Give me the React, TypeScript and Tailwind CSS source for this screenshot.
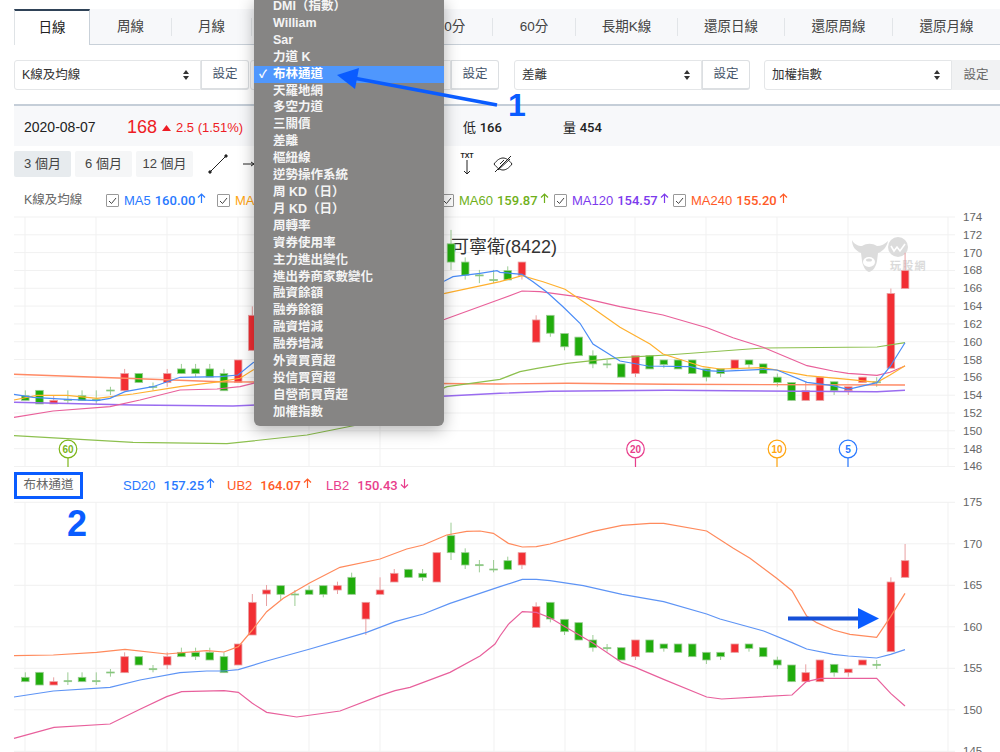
const fontStack = "font-['Liberation_Sans','Noto_Sans_CJK_TC',sans-serif]";

const tabs = [
  { label: '日線', w: 'w-[76px]' },
  { label: '周線', w: 'w-[82px]' },
  { label: '月線', w: 'w-[80px]' },
  { label: '5分', w: 'w-[79px]' },
  { label: '15分', w: 'w-[79px]' },
  { label: '30分', w: 'w-[83px]' },
  { label: '60分', w: 'w-[83px]' },
  { label: '長期K線', w: 'w-[102px]' },
  { label: '還原日線', w: 'w-[107px]' },
  { label: '還原周線', w: 'w-[108px]' },
  { label: '還原月線', w: 'w-[107px]' },
];

const menuItems = [
  'DMI（指數）', 'William', 'Sar', '力道 K', '布林通道', '天羅地網', '多空力道', '三關價', '差離',
  '樞紐線', '逆勢操作系統', '周 KD（日）', '月 KD（日）', '周轉率', '資券使用率', '主力進出變化',
  '進出券商家數變化', '融資餘額', '融券餘額', '融資增減', '融券增減', '外資買賣超', '投信買賣超',
  '自營商買賣超', '加權指數',
];

// high, body top, body bottom, low, up - all read off the lower chart
const candles: [number, number, number, number, number][] = [
  [607, 622, 635, 635, 0], [607, 607, 645, 645, 0], [622, 635, 645, 645, 1], [607, 632, 635, 645, 0],
  [607, 622, 635, 635, 0], [607, 632, 635, 645, 0], [597, 606, 608, 620, 0], [547, 560, 608, 608, 1],
  [560, 560, 585, 585, 0], [585, 596, 598, 607, 0], [547, 560, 585, 597, 1], [533, 547, 560, 560, 0],
  [533, 547, 560, 570, 0], [533, 547, 570, 570, 0], [547, 560, 608, 608, 0], [522, 522, 585, 585, 1],
  [372, 397, 495, 495, 1], [345, 360, 372, 408, 1], [347, 347, 373, 390, 0], [360, 372, 374, 408, 0],
  [347, 360, 373, 373, 0], [347, 347, 373, 382, 0], [335, 347, 360, 372, 1], [308, 322, 373, 373, 0],
  [397, 397, 447, 495, 1], [322, 360, 373, 373, 1], [297, 310, 336, 336, 1], [298, 298, 322, 322, 0],
  [297, 310, 322, 333, 0], [248, 248, 336, 336, 1], [158, 197, 248, 270, 0], [235, 248, 285, 297, 0],
  [270, 284, 286, 307, 0], [270, 297, 299, 307, 0], [260, 272, 298, 298, 0], [248, 248, 285, 297, 1],
  [397, 410, 472, 472, 1], [397, 397, 447, 457, 0], [448, 448, 485, 495, 0], [458, 458, 510, 510, 0],
  [495, 510, 533, 545, 0], [522, 533, 535, 545, 0], [533, 533, 570, 570, 0], [510, 510, 560, 570, 1],
  [510, 510, 547, 547, 0], [522, 522, 535, 545, 0], [522, 522, 547, 547, 0], [522, 522, 560, 560, 0],
  [547, 547, 570, 582, 0], [547, 547, 560, 570, 0], [522, 522, 547, 547, 1], [522, 522, 535, 545, 0],
  [533, 533, 560, 560, 0], [560, 570, 585, 597, 0], [585, 585, 635, 635, 0], [583, 608, 635, 635, 1],
  [570, 570, 635, 635, 1], [583, 583, 608, 620, 0], [597, 597, 608, 620, 1], [570, 570, 585, 585, 1],
  [570, 583, 585, 597, 0], [322, 336, 545, 545, 1], [222, 272, 322, 322, 1],
];

const candleX = (i: number) => 25.3 + i * 14.19;
const lowerY = (z: number) => 470 + z / 3;
const upperY = (z: number) => {
  const price = 175 - (z - 97) / 24.93;
  return 217 + (174 - price) * 8.91;
};

const gridX = [25, 96, 167, 238, 309, 380, 494, 565, 635, 706, 777, 848, 948];

const upperLines = [
  { color: '#ff8a65', d: '14,374.3 125,378.3 220,381.7 500,384 567,383.3 667,384.3 905,385', w: 1.4 },
  { color: '#9a6cf0', d: '14,402.3 133,405 233,406 447,396 500,393.3 550,391.3 667,390.3 877,391.7 905,390.3', w: 1.4 },
  { color: '#8dc04f', d: '14,435.7 133,442.3 227,443.7 307,435 357,425 447,386.7 500,379.3 520,371.7 537,368.3 567,363.3 620,357.7 667,355 763,348 877,347 905,342.7', w: 1.2 },
  { color: '#e9609a', d: '14,417.3 53,411 110,406.7 140,400 180,390 217,389 240,386.7 253,383.3 445,319.3 500,299.3 522,291 540,291.7 577,296.7 620,306.7 663,315 707,327.7 733,337.7 763,347.3 807,365.7 833,371 848,373.3 877,375.3 890,372.3 905,366', w: 1.2 },
  { color: '#ffb02e', d: '14,400 37,395.3 67,395.3 97,398.3 133,394 180,386.7 220,381.7 240,378.3 253,370 445,293.3 500,281.7 522,275.7 543,281.7 565,289.3 593,308.3 620,327.3 650,344 663,354 703,366.7 720,369 763,367.7 807,375.7 848,379.3 877,382.3 890,375 905,365.7', w: 1.2 },
  { color: '#4a8cf7', d: '14,394.3 33,397.3 67,399.3 97,400.7 110,398.3 125,391.7 153,386.7 180,377.3 220,376.7 238,375 253,362.7 445,280.7 453,276.7 480,273.3 497,270.7 500,272.3 522,274.3 533,281.7 547,292.3 563,306.7 580,323.3 593,344 620,361 648,366 690,366.7 707,370.7 720,371.3 763,369.3 777,370 807,382.3 833,385.7 848,389.3 877,382.7 890,366.7 905,342.7', w: 1.2 },
];

const toLower = (pts: number[][]) => pts.map(([x, y]) => `${x / 3},${lowerY(y)}`).join(' ');

const lowerLines = [
  {
    color: '#ff8a5c',
    d: toLower([[42, 557], [160, 555], [290, 547], [375, 538], [500, 552], [620, 542], [672, 546], [715, 530], [757, 480], [800, 425], [850, 385], [930, 338], [1020, 292], [1140, 267], [1220, 237], [1270, 225], [1340, 195], [1400, 184], [1440, 183], [1480, 190], [1500, 203], [1525, 220], [1567, 231], [1609, 230], [1650, 222], [1780, 184], [1866, 166], [1950, 160], [1991, 160], [2120, 183], [2200, 235], [2250, 265], [2330, 325], [2376, 362], [2420, 438], [2450, 458], [2500, 480], [2550, 493], [2630, 502], [2672, 440], [2715, 370]]),
  },
  {
    color: '#5e94f5',
    d: toLower([[42, 681], [160, 663], [330, 652], [420, 630], [540, 608], [620, 603], [672, 603], [715, 599], [800, 573], [930, 537], [1100, 487], [1185, 455], [1270, 432], [1350, 400], [1500, 350], [1567, 328], [1609, 328], [1650, 332], [1750, 347], [1866, 373], [1991, 395], [2120, 432], [2160, 447], [2291, 483], [2376, 518], [2420, 537], [2500, 553], [2545, 558], [2630, 564], [2672, 553], [2715, 539]]),
  },
  {
    color: '#e8609c',
    d: toLower([[42, 805], [162, 772], [330, 762], [420, 718], [500, 680], [545, 665], [672, 662], [715, 667], [757, 700], [800, 727], [890, 741], [1020, 723], [1140, 677], [1185, 662], [1230, 652], [1350, 607], [1440, 558], [1485, 522], [1500, 498], [1525, 463], [1567, 425], [1609, 427], [1650, 443], [1695, 470], [1780, 520], [1866, 578], [1906, 592], [1991, 628], [2120, 681], [2165, 687], [2376, 675], [2419, 635], [2462, 625], [2630, 625], [2672, 670], [2715, 708]]),
  },
];

const upperTicks = [174, 172, 170, 168, 166, 164, 162, 160, 158, 156, 154, 152, 150, 148, 146];
const lowerTicks = [175, 170, 165, 160, 155, 150, 145];

const badges = [
  { x: 68, label: '60', color: '#7cb518' },
  { x: 635.5, label: '20', color: '#e83e8c' },
  { x: 777, label: '10', color: '#ffa50f' },
  { x: 848, label: '5', color: '#2979ff' },
];

function Candles({ y }: { y: (z: number) => number }) {
  return (
    <>
      {candles.map(([hi, top, bot, lo, up], i) => {
        const x = candleX(i);
        const fill = up ? '#f22e33' : '#20ac0c';
        const edge = up ? '#e8a0a2' : '#9ccc94';
        const h = Math.max(y(bot) - y(top), 1);
        return (
          <g key={i}>
            <line x1={x} x2={x} y1={y(hi)} y2={y(lo)} stroke={edge} strokeWidth="1" />
            <rect x={x - 3.8} y={y(top)} width="7.6" height={h} fill={fill} stroke={edge} strokeWidth="0.8" />
          </g>
        );
      })}
    </>
  );
}

function Watermark() {
  return (
    <g>
      <path d="M852 240c0 7 4 11 9 13l1 8c1 6 4 10 7 11 4-1 7-5 8-11l1-8c4-1 9-6 10-12-3 3-7 5-11 5-5-3-10-3-15 0-4 0-8-2-10-6z" fill="#dcdcdc" />
      <ellipse cx="869" cy="262" rx="6" ry="5" fill="#fff" />
      <ellipse cx="869" cy="260" rx="3" ry="1.6" fill="#dcdcdc" />
      <circle cx="898" cy="247" r="10" fill="#dcdcdc" />
      <path d="M891 246l3 5 3-4 3 4 5-7" fill="none" stroke="#fff" strokeWidth="1.6" />
      <text x="890" y="270" fontSize="11" letterSpacing="1.2" fontWeight="600" fill="#dadada">玩股網</text>
    </g>
  );
}

function UpperChart() {
  return (
    <svg viewBox="0 212 1000 260" className="block w-[1000px] h-[260px]">
      {upperTicks.map((t, i) => (
        <g key={t}>
          <line x1="14" x2="955" y1={217 + i * 17.82} y2={217 + i * 17.82} stroke="#f1f1f1" />
          <text x="963" y={221 + i * 17.82} fontSize="11.5" fill="#666">{t}</text>
        </g>
      ))}
      {gridX.map((x) => (
        <line key={x} x1={x} x2={x} y1="217" y2="467" stroke="#f1f1f1" />
      ))}
      <Watermark />
      <text x="557" y="253" textAnchor="end" fontSize="18" fill="#333">可寧衛(8422)</text>
      <Candles y={upperY} />
      {upperLines.map((l) => (
        <polyline key={l.color} points={l.d} fill="none" stroke={l.color} strokeWidth={l.w} />
      ))}
      {badges.map((b) => (
        <g key={b.label}>
          <line x1={b.x} x2={b.x} y1="458" y2="467" stroke={b.color} strokeWidth="1.2" />
          <circle cx={b.x} cy="449" r="8.8" fill="#fff" stroke={b.color} strokeWidth="1.2" />
          <text x={b.x} y="452.5" textAnchor="middle" fontSize="10" fontWeight="700" fill={b.color}>{b.label}</text>
        </g>
      ))}
    </svg>
  );
}

function LowerChart() {
  return (
    <svg viewBox="0 499 1000 253" className="block w-[1000px] h-[253px] overflow-visible">
      {lowerTicks.map((t, i) => {
        const y = 502.3 + i * 41.5;
        return (
          <g key={t}>
            <line x1="14" x2="955" y1={y} y2={y} stroke="#f1f1f1" />
            <text x="963" y={y + 4} fontSize="11.5" fill="#666">{t}</text>
          </g>
        );
      })}
      {gridX.map((x) => (
        <line key={x} x1={x} x2={x} y1="502" y2="752" stroke="#f1f1f1" />
      ))}
      <Candles y={lowerY} />
      {lowerLines.map((l) => (
        <polyline key={l.color} points={l.d} fill="none" stroke={l.color} strokeWidth="1.2" />
      ))}
    </svg>
  );
}

function Select({ label, muted, w = 'w-[188px]' }: { label: string; muted?: boolean; w?: string }) {
  return (
    <div className="flex h-[30px]">
      <div className={`${w} flex items-center justify-between pl-[7px] pr-[10px] bg-white border border-[#e4e6e8] rounded-l-[3px] text-[12.5px] text-[#333]`}>
        <span>{label}</span>
        <svg width="8" height="12" viewBox="0 0 8 12" fill="#333">
          <path d="M4 1l3 4H1zM4 11L1 7h6z" />
        </svg>
      </div>
      {muted ? (
        <div className="w-[48px] flex items-center justify-center bg-[#f1f2f3] text-[12.5px] text-[#666]">設定</div>
      ) : (
        <div className="w-[48px] flex items-center justify-center bg-white border border-[#dcdfe2] border-b-2 rounded-r-[3px] text-[12.5px] text-[#44546a]">設定</div>
      )}
    </div>
  );
}

function Check() {
  return (
    <span className="w-[13px] h-[13px] mr-[5px] border border-[#999] rounded-[1px] flex items-center justify-center shrink-0">
      <svg width="9" height="8" viewBox="0 0 9 8" fill="none" stroke="#444" strokeWidth="1">
        <path d="M1 4l2.5 2.5L8 1" />
      </svg>
    </span>
  );
}

function UpArrow({ down }: { down?: boolean }) {
  return (
    <svg width="9" height="11" viewBox="0 0 9 11" fill="none" stroke="currentColor" strokeWidth="1.2" className="ml-[2px] -mt-1">
      {down ? <path d="M4.5 1v9M1 6.5l3.5 3.5L8 6.5" /> : <path d="M4.5 10V1M1 4.5L4.5 1 8 4.5" />}
    </svg>
  );
}

function Legend({ name, value, color, down, gap = 'ml-1' }: { name: string; value: string; color: string; down?: boolean; gap?: string }) {
  return (
    <span className={`flex items-center text-[13px] ${color}`}>
      <span>{name}</span>
      <span className={`${gap} font-['Roboto'] font-medium`}>{value}</span>
      <UpArrow down={down} />
    </span>
  );
}

const maItems = [
  { name: 'MA5', value: '160.00', color: 'text-[#2979ff]', w: 'w-[111px]' },
  { name: 'MA10', value: '161.41', color: 'text-[#ffa50f]', w: 'w-[113px]' },
  { name: 'MA20', value: '156.20', color: 'text-[#e83e8c]', w: 'w-[111px]' },
  { name: 'MA60', value: '159.87', color: 'text-[#6fb01a]', w: 'w-[113px]' },
  { name: 'MA120', value: '154.57', color: 'text-[#7c3aed]', w: 'w-[119px]' },
  { name: 'MA240', value: '155.20', color: 'text-[#ff5a26]', w: 'w-[119px]' },
];

export default function App() {
  return (
    <div className={`relative w-[1000px] h-[752px] overflow-hidden bg-white text-[#333] ${fontStack}`}>
      {/* period tabs */}
      <div className="pt-[9px] pl-[14px]">
        <div className="flex h-[36px] bg-[#f7f8fa] border-b border-[#c9d1d9]">
          {tabs.map((t, i) => (
            <div key={t.label} className={`${t.w} pt-px flex items-center justify-center text-[13.5px] ${i === 0 ? 'bg-white border-t-2 border-t-[#2f4257] border-l border-l-[#dfe3e6] border-r border-r-[#c9d1d9] -mb-px text-[#222]' : 'text-[#444]'}`}>
              <span className={i > 0 && i < tabs.length - 1 ? 'w-full text-center border-r border-[#e2e5e8] leading-[14px] py-0.5' : ''}>{t.label}</span>
            </div>
          ))}
        </div>
      </div>

      {/* indicator selects */}
      <div className="flex pl-[14px] mt-[15px] gap-[1px]">
        <Select label="K線及均線" w="w-[187px]" />
        <Select label="布林通道" w="w-[201px]" />
        <div className="ml-[14px]"><Select label="差離" /></div>
        <div className="ml-[13px]"><Select label="加權指數" muted /></div>
      </div>

      {/* quote bar */}
      <div className="ml-[14px] mt-[14px] h-[42px] pt-[3px] bg-[#f7f8fa] border-t-2 border-[#c5ced8] flex items-center pl-[10px] text-[13px] text-[#222]">
        <span className="w-[103px] text-[14px]">2020-08-07</span>
        <span className="text-[18px] text-[#ee1c25] w-[35px]">168</span>
        <span className="text-[#ee1c25] w-[101px] flex items-center">
          <svg width="9" height="6" viewBox="0 0 9 6" fill="#ee1c25" className="mr-[5px]">
            <path d="M4.5 0L9 6H0z" />
          </svg>
          2.5 (1.51%)
        </span>
        <span className="w-[100px]">開 <b className="font-['Roboto'] font-medium">165</b></span>
        <span className="w-[100px]">高 <b className="font-['Roboto'] font-medium">170</b></span>
        <span className="w-[100px]">低 <b className="font-['Roboto'] font-medium">166</b></span>
        <span>量 <b className="font-['Roboto'] font-medium">454</b></span>
      </div>

      {/* range buttons and drawing tools */}
      <div className="ml-[14px] mt-[5px] h-[26px] flex items-center text-[13px] text-[#444]">
        <span className="w-[57px] h-[26px] rounded-[2px] bg-[#e7ebee] flex items-center justify-center">3 個月</span>
        <span className="ml-[4px] w-[57px] h-[26px] rounded-[2px] bg-[#f5f6f7] flex items-center justify-center">6 個月</span>
        <span className="ml-[4px] w-[57px] h-[26px] rounded-[2px] bg-[#f5f6f7] flex items-center justify-center">12 個月</span>
        <svg width="20" height="20" viewBox="0 0 20 20" fill="#222" stroke="#222" className="ml-[15px]">
          <path d="M2 18L18 2" strokeWidth="1" />
          <circle cx="2" cy="18" r="1.2" />
          <circle cx="18" cy="2" r="1.2" />
        </svg>
        <svg width="12" height="10" viewBox="0 0 12 10" fill="none" stroke="#222" className="ml-[15px]">
          <path d="M0 5h11M8 3l3 2-3 2" strokeWidth="1" />
        </svg>
        <div className="w-[204px]" />
        <div className="flex flex-col items-center w-[16px] text-[#222]">
          <span className="text-[7px] font-bold leading-[8px]">TXT</span>
          <svg width="8" height="16" viewBox="0 0 8 16" fill="none" stroke="#222">
            <path d="M4 0v14M1 11l3 3 3-3" strokeWidth="1" />
          </svg>
        </div>
        <svg width="22" height="20" viewBox="0 0 22 20" fill="none" stroke="#222" strokeWidth="1" className="ml-[17px]">
          <path d="M2 10c3-4 6-6 9-6s6 2 9 6c-3 4-6 6-9 6s-6-2-9-6z" />
          <path d="M3 18L19 2M6 16L18 5M8 10l4-4" />
        </svg>
      </div>

      {/* MA legend */}
      <div className="h-[24px] mt-[11px] pt-px flex items-center pl-[24px]">
        <span className="w-[82px] text-[12.5px] text-[#666]">K線及均線</span>
        {maItems.map((m) => (
          <span key={m.name} className={`${m.w} flex items-center`}>
            <Check />
            <Legend name={m.name} value={m.value} color={m.color} />
          </span>
        ))}
      </div>

      <UpperChart />

      {/* bollinger legend */}
      <div className="h-[27px] flex items-center pl-[14px]">
        <span className="w-[69px] h-[27px] border-[3px] border-[#0a5cff] flex items-center justify-center text-[12.5px] text-[#666]">布林通道</span>
        <span className="ml-[40px] w-[104px]"><Legend name="SD20" value="157.25" color="text-[#2979ff]" gap="ml-2" /></span>
        <span className="w-[99px]"><Legend name="UB2" value="164.07" color="text-[#ff5a26]" gap="ml-2" /></span>
        <Legend name="LB2" value="150.43" color="text-[#e83e8c]" gap="ml-2" down />
      </div>

      <LowerChart />

      {/* indicator menu, cut off by the top of the window */}
      <div className="absolute left-[254px] top-[-2px] w-[190px] pb-[5px] rounded-b-md bg-[#868584] shadow-[0_4px_16px_rgba(0,0,0,0.3)] text-[12.5px] font-semibold text-[#f4f4f4]">
        {menuItems.map((item, i) => (
          <div key={item} className={`relative h-[16.92px] leading-[17px] pl-[19px] ${i === 4 ? 'bg-[#4f97fd] text-white' : ''}`}>
            {i === 4 && <span className="absolute left-[5px] top-0 text-[11px]">✓</span>}
            {item}
          </div>
        ))}
      </div>

      {/* blue annotations */}
      <svg viewBox="0 0 1000 752" className="absolute inset-0 w-[1000px] h-[752px] pointer-events-none">
        <path d="M497 105L356 78.5" stroke="#0a5cff" strokeWidth="3.5" />
        <path d="M337 75l22-7-4 21z" fill="#0a5cff" />
        <path d="M788 618.5h72" stroke="#1550d8" strokeWidth="4" />
        <path d="M858 608l21 10.5-21 10.5z" fill="#0a5cff" />
      </svg>
      <span className="absolute left-[508px] top-[85px] text-[32px] font-bold leading-[40px] text-[#0a5cff]">1</span>
      <span className="absolute left-[67px] top-[504px] text-[36px] font-bold leading-[40px] text-[#0a5cff]">2</span>
    </div>
  );
}
